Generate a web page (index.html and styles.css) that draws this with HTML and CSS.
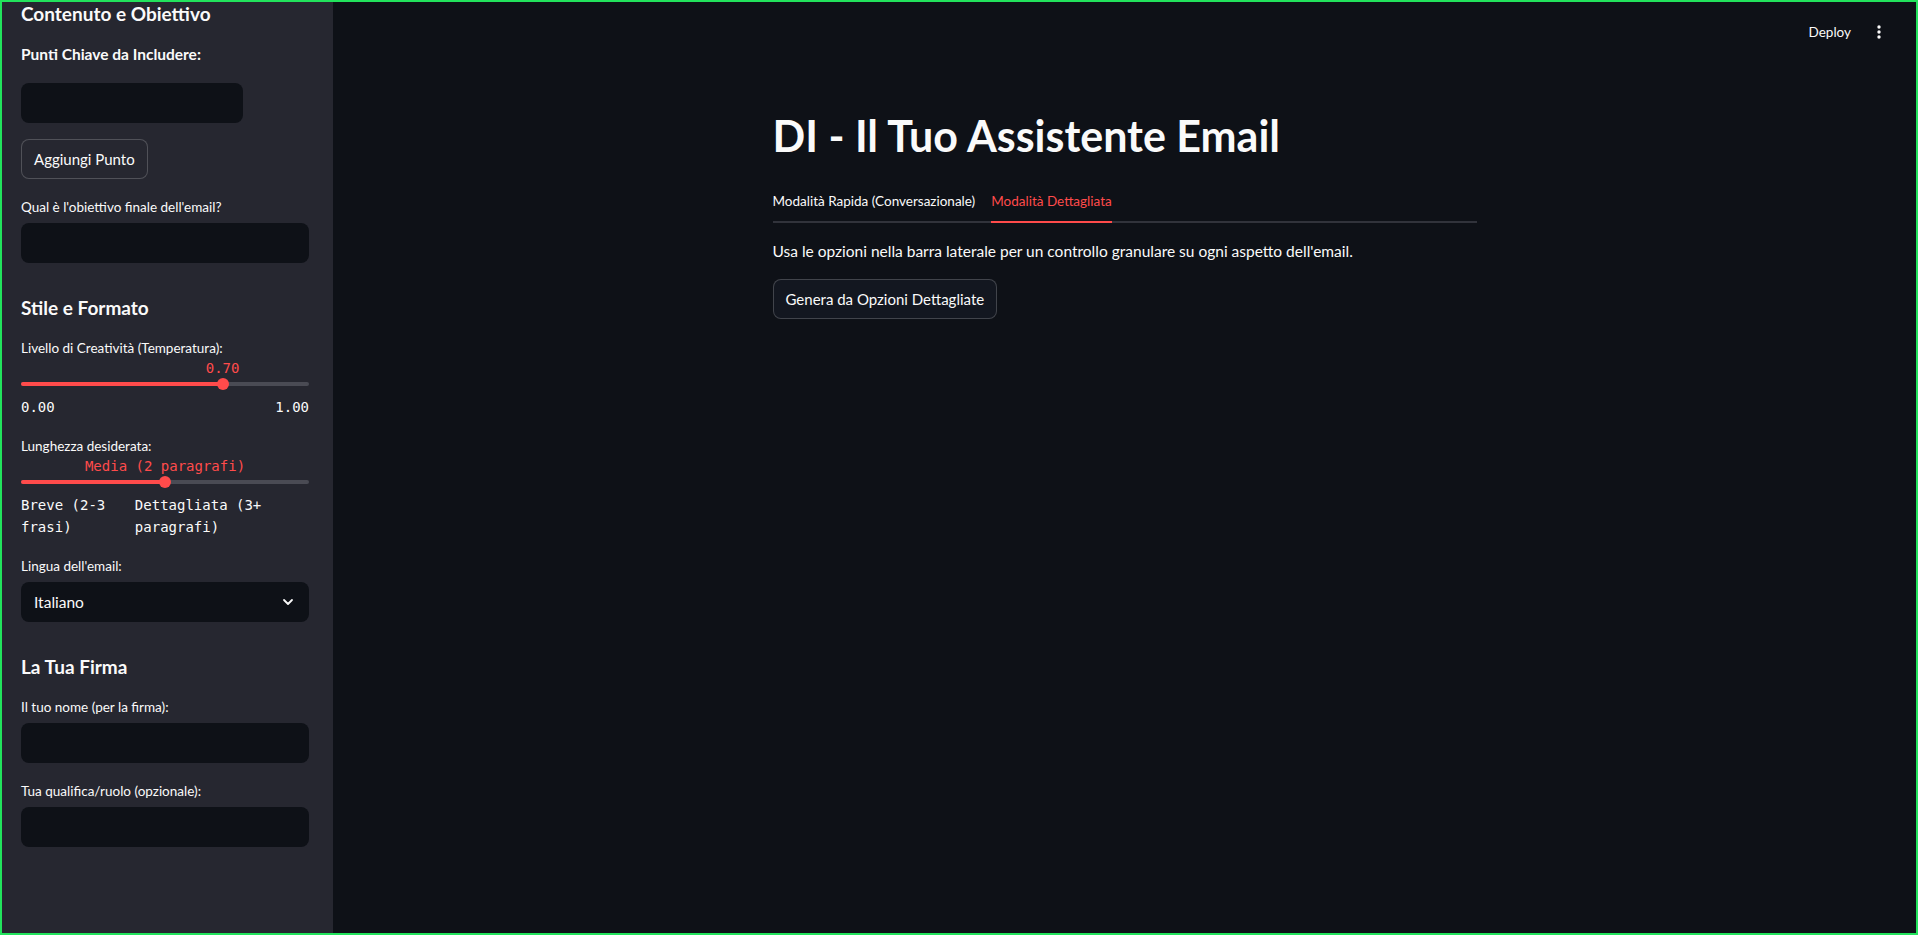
FILE: index.html
```html
<!DOCTYPE html>
<html lang="it">
<head>
<meta charset="utf-8">
<title>DI - Il Tuo Assistente Email</title>
<link rel="stylesheet" href="styles.css">
</head>
<body>
<div class="app">
  <aside class="sidebar">
    <h3 class="side-h first">Contenuto e Obiettivo</h3>
    <p class="strong-label">Punti Chiave da Includere:</p>
    <div class="field short"></div>
    <button class="btn side-btn">Aggiungi Punto</button>
    <label class="lbl">Qual è l'obiettivo finale dell'email?</label>
    <div class="field"></div>

    <h3 class="side-h">Stile e Formato</h3>
    <label class="lbl">Livello di Creatività (Temperatura):</label>
    <div class="slider">
      <div class="slider-value-row"><span class="slider-value" style="left:70%">0.70</span></div>
      <div class="track"><div class="fill" style="width:70%"></div><div class="thumb" style="left:70%"></div></div>
      <div class="ticks"><span>0.00</span><span>1.00</span></div>
    </div>

    <label class="lbl">Lunghezza desiderata:</label>
    <div class="slider">
      <div class="slider-value-row"><span class="slider-value" style="left:50%">Media (2 paragrafi)</span></div>
      <div class="track"><div class="fill" style="width:50%"></div><div class="thumb" style="left:50%"></div></div>
      <div class="ticks"><span>Breve (2-3 frasi)</span><span>Dettagliata (3+ paragrafi)</span></div>
    </div>

    <label class="lbl">Lingua dell'email:</label>
    <div class="field select">
      <span>Italiano</span>
      <svg class="chev" width="12" height="8" viewBox="0 0 12 8"><path d="M2 2l4 4 4-4" fill="none" stroke="#fafafa" stroke-width="1.8" stroke-linecap="round" stroke-linejoin="round"/></svg>
    </div>

    <h3 class="side-h">La Tua Firma</h3>
    <label class="lbl">Il tuo nome (per la firma):</label>
    <div class="field"></div>
    <label class="lbl">Tua qualifica/ruolo (opzionale):</label>
    <div class="field"></div>
  </aside>

  <main class="main">
    <header class="topbar">
      <span class="deploy">Deploy</span>
      <svg class="dots" width="4" height="16" viewBox="0 0 4 16"><circle cx="2" cy="3" r="1.7" fill="#fafafa"/><circle cx="2" cy="8" r="1.7" fill="#fafafa"/><circle cx="2" cy="13" r="1.7" fill="#fafafa"/></svg>
    </header>
    <div class="block">
      <h1 class="title">DI - Il Tuo Assistente Email</h1>
      <div class="tabs">
        <span class="tab">Modalità Rapida (Conversazionale)</span>
        <span class="tab active">Modalità Dettagliata</span>
      </div>
      <p class="text">Usa le opzioni nella barra laterale per un controllo granulare su ogni aspetto dell'email.</p>
      <button class="btn main-btn">Genera da Opzioni Dettagliate</button>
    </div>
  </main>
</div>
</body>
</html>
```

FILE: styles.css
```css
* { box-sizing: border-box; }
html, body { margin: 0; padding: 0; height: 100%; }
body {
  background: #0e1117;
  color: #fafafa;
  font-family: Lato, "Noto Sans", sans-serif;
  overflow: hidden;
}
.app {
  display: flex;
  height: 935px;
  border: 2px solid #22e35c;
}
.sidebar {
  width: 331px;
  flex: none;
  background: #262730;
  padding: 0 24px 0 19px;
  display: flex;
  flex-direction: column;
  align-items: flex-start;
}
.sidebar > * { flex: none; }
.side-h {
  margin: 33px 0 0;
  font-size: 19px;
  line-height: 24px;
  font-weight: 700;
}
.side-h.first { margin-top: 0; }
.strong-label {
  margin: 16px 0 0;
  font-size: 15.5px;
  line-height: 24px;
  font-weight: 700;
}
.lbl {
  display: block;
  margin-top: 18px;
  font-size: 13.5px;
  line-height: 21px;
}
.field {
  width: 288px;
  height: 40px;
  margin-top: 5px;
  background: #0e1117;
  border-radius: 8px;
}
.strong-label + .field { margin-top: 17px; }
.field.short { width: 222px; }
.field.select {
  display: flex;
  align-items: center;
  justify-content: space-between;
  padding: 0 15px 0 13px;
  font-size: 15.5px;
}
.btn {
  font-family: inherit;
  color: #fafafa;
  border: 1px solid rgba(250, 250, 250, 0.2);
  border-radius: 8px;
  height: 40px;
  padding: 0 12px;
  font-size: 15px;
  white-space: nowrap;
  cursor: pointer;
}
.side-btn {
  margin-top: 16px;
  background: #262730;
}
.slider { width: 288px; }
.slider-value-row {
  position: relative;
  height: 18px;
}
.slider-value {
  position: absolute;
  top: 0;
  transform: translateX(-50%);
  white-space: nowrap;
  font-family: "DejaVu Sans Mono", monospace;
  font-size: 14px;
  line-height: 18px;
  color: #ff4b4b;
}
.track {
  position: relative;
  height: 4px;
  margin: 5px 0 10px;
  background: #4a4b54;
  border-radius: 2px;
}
.fill {
  height: 4px;
  background: #ff4b4b;
  border-radius: 2px;
}
.thumb {
  position: absolute;
  top: -4px;
  width: 12px;
  height: 12px;
  margin-left: -6px;
  border-radius: 50%;
  background: #ff4b4b;
}
.ticks {
  display: flex;
  justify-content: space-between;
  font-family: "DejaVu Sans Mono", monospace;
  font-size: 14px;
  line-height: 22px;
}
.main {
  flex: 1;
  display: flex;
  flex-direction: column;
  min-width: 0;
}
.topbar {
  height: 60px;
  display: flex;
  justify-content: flex-end;
  align-items: center;
  gap: 26px;
  padding: 0 35px 0 0;
}
.deploy { font-size: 13.5px; }
.dots { display: block; }
.block {
  width: 704px;
  margin: 48px auto 0;
}
.title {
  margin: 0;
  font-size: 43px;
  line-height: 52px;
  font-weight: 700;
}
.tabs {
  display: flex;
  gap: 16px;
  margin-top: 29px;
  border-bottom: 2px solid #31333b;
}
.tab {
  font-size: 13.5px;
  line-height: 21px;
  padding-bottom: 9px;
  margin-bottom: -2px;
  border-bottom: 2px solid transparent;
}
.tab.active {
  color: #ff4b4b;
  border-bottom-color: #ff4b4b;
}
.text {
  margin: 16px 0 0;
  font-size: 15.5px;
  line-height: 25px;
}
.main-btn {
  display: block;
  margin-top: 15px;
  background: #131720;
}
```
